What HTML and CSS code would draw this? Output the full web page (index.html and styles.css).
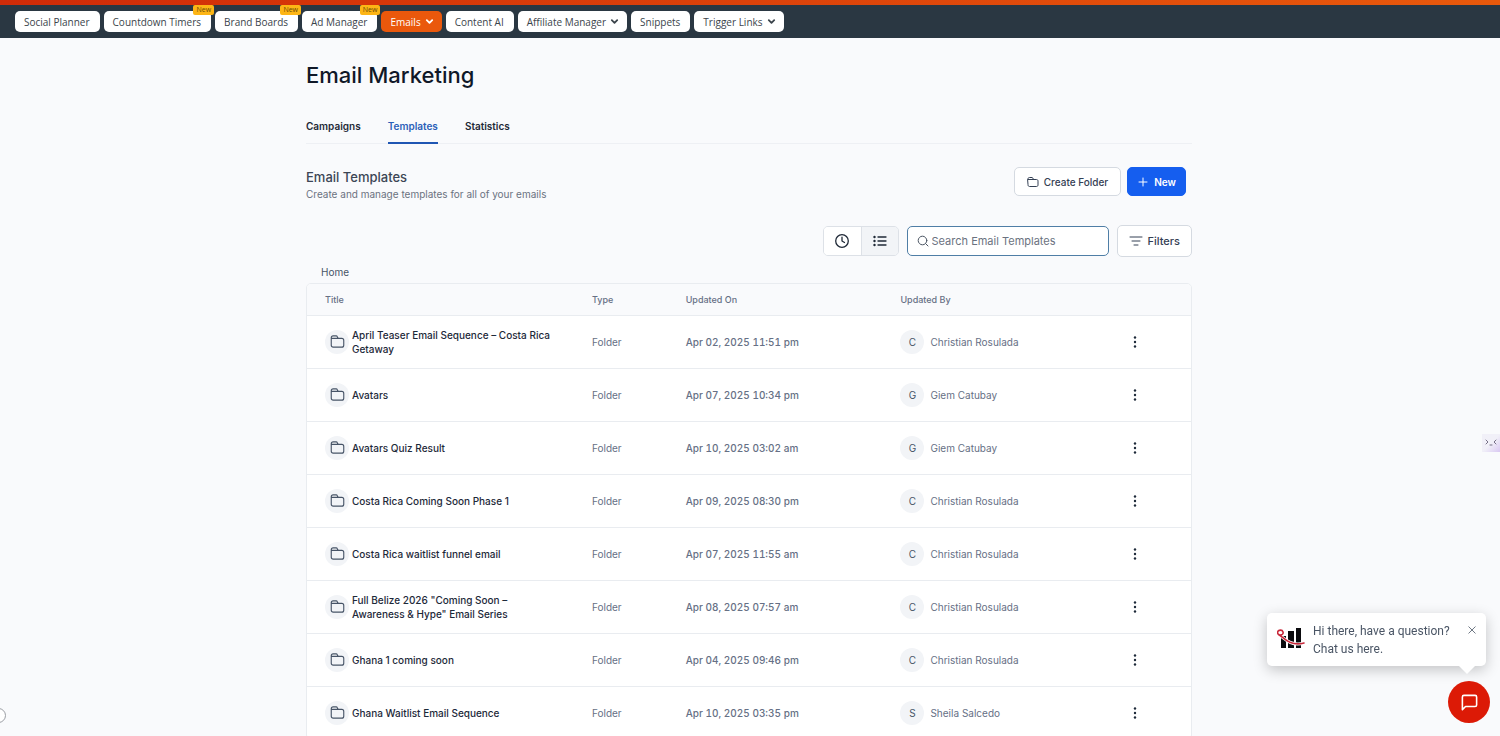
FILE: index.html
```html
<!DOCTYPE html>
<html lang="en">
<head>
    <meta charset="UTF-8">
    <meta name="viewport" content="width=device-width, initial-scale=1.0">
    <title>Email Marketing</title>
    <link rel="stylesheet" href="styles.css">
</head>
<body>
    <svg class="sprite" aria-hidden="true">
        <symbol id="icon-folder" viewBox="0 0 24 24">
            <path d="M13 7l-1.500-3C11.200 3.300 10.700 3 10 3H5C3 3 2 4 2 6v1m0 0h16.800C20.900 7 22 8.100 22 10.200v7.600c0 2.100-1.100 3.200-3.200 3.200H5.200C3.100 21 2 19.900 2 17.800z"/>
        </symbol>
        <symbol id="icon-chevron" viewBox="0 0 10 10">
            <path d="M2 3.500l3 3 3-3"/>
        </symbol>
        <symbol id="icon-dots" viewBox="0 0 18 18">
            <circle cx="9" cy="4.500" r="1.200"/>
            <circle cx="9" cy="9" r="1.200"/>
            <circle cx="9" cy="13.500" r="1.200"/>
        </symbol>
    </svg>

    <header class="topbar">
        <nav class="menu">
            <a href="#">Social Planner</a>
            <a href="#">Countdown Timers<span class="badge">New</span></a>
            <a href="#">Brand Boards<span class="badge">New</span></a>
            <a href="#">Ad Manager<span class="badge">New</span></a>
            <a href="#" class="active">Emails<svg class="chevron"><use href="#icon-chevron"/></svg></a>
            <a href="#">Content AI</a>
            <a href="#">Affiliate Manager<svg class="chevron"><use href="#icon-chevron"/></svg></a>
            <a href="#">Snippets</a>
            <a href="#">Trigger Links<svg class="chevron"><use href="#icon-chevron"/></svg></a>
        </nav>
    </header>

    <main class="container">
        <h1>Email Marketing</h1>

        <nav class="tabs">
            <a href="#">Campaigns</a>
            <a href="#" class="active">Templates</a>
            <a href="#">Statistics</a>
        </nav>

        <div class="section-head">
            <div>
                <h2>Email Templates</h2>
                <p>Create and manage templates for all of your emails</p>
            </div>
            <div class="actions">
                <button class="btn" type="button"><svg class="btn-icon"><use href="#icon-folder"/></svg>Create Folder</button>
                <button class="btn btn-primary" type="button"><svg class="btn-icon" viewBox="0 0 12 12"><path d="M6 2v8M2 6h8"/></svg>New</button>
            </div>
        </div>

        <div class="toolbar">
            <div class="view-toggle">
                <button type="button" aria-label="Recent">
                    <svg viewBox="0 0 16 16"><circle cx="8" cy="8" r="6.300"/><path d="M8 4.200V8l2.500 1.500"/></svg>
                </button>
                <button type="button" class="active" aria-label="List view">
                    <svg viewBox="0 0 16 16"><path d="M6 4h8M6 8h8M6 12h8"/><path class="bullets" d="M2.500 4h.01M2.500 8h.01M2.500 12h.01"/></svg>
                </button>
            </div>
            <label class="search">
                <svg viewBox="0 0 12 12"><circle cx="5.500" cy="5.500" r="4.300"/><path d="M8.700 8.700L11 11"/></svg>
                <input type="text" placeholder="Search Email Templates" aria-label="Search Email Templates">
            </label>
            <button class="btn btn-filters" type="button"><svg class="btn-icon" viewBox="0 0 14 12"><path d="M1 2h12M3 6h8M5 10h4"/></svg>Filters</button>
        </div>

        <a class="breadcrumb" href="#">Home</a>

        <div class="table-wrap">
            <table>
                <thead>
                    <tr>
                        <th class="col-title">Title</th>
                        <th class="col-type">Type</th>
                        <th class="col-date">Updated On</th>
                        <th class="col-user">Updated By</th>
                        <th class="col-menu"></th>
                    </tr>
                </thead>
                <tbody>
                    <tr>
                        <td><div class="title"><span class="circle"><svg><use href="#icon-folder"/></svg></span>April Teaser Email Sequence – Costa Rica Getaway</div></td>
                        <td>Folder</td>
                        <td class="date">Apr 02, 2025 11:51 pm</td>
                        <td><div class="user"><span class="circle">C</span>Christian Rosulada</div></td>
                        <td><button class="more" type="button" aria-label="More"><svg><use href="#icon-dots"/></svg></button></td>
                    </tr>
                    <tr>
                        <td><div class="title"><span class="circle"><svg><use href="#icon-folder"/></svg></span>Avatars</div></td>
                        <td>Folder</td>
                        <td class="date">Apr 07, 2025 10:34 pm</td>
                        <td><div class="user"><span class="circle">G</span>Giem Catubay</div></td>
                        <td><button class="more" type="button" aria-label="More"><svg><use href="#icon-dots"/></svg></button></td>
                    </tr>
                    <tr>
                        <td><div class="title"><span class="circle"><svg><use href="#icon-folder"/></svg></span>Avatars Quiz Result</div></td>
                        <td>Folder</td>
                        <td class="date">Apr 10, 2025 03:02 am</td>
                        <td><div class="user"><span class="circle">G</span>Giem Catubay</div></td>
                        <td><button class="more" type="button" aria-label="More"><svg><use href="#icon-dots"/></svg></button></td>
                    </tr>
                    <tr>
                        <td><div class="title"><span class="circle"><svg><use href="#icon-folder"/></svg></span>Costa Rica Coming Soon Phase 1</div></td>
                        <td>Folder</td>
                        <td class="date">Apr 09, 2025 08:30 pm</td>
                        <td><div class="user"><span class="circle">C</span>Christian Rosulada</div></td>
                        <td><button class="more" type="button" aria-label="More"><svg><use href="#icon-dots"/></svg></button></td>
                    </tr>
                    <tr>
                        <td><div class="title"><span class="circle"><svg><use href="#icon-folder"/></svg></span>Costa Rica waitlist funnel email</div></td>
                        <td>Folder</td>
                        <td class="date">Apr 07, 2025 11:55 am</td>
                        <td><div class="user"><span class="circle">C</span>Christian Rosulada</div></td>
                        <td><button class="more" type="button" aria-label="More"><svg><use href="#icon-dots"/></svg></button></td>
                    </tr>
                    <tr>
                        <td><div class="title"><span class="circle"><svg><use href="#icon-folder"/></svg></span>Full Belize 2026 "Coming Soon – Awareness &amp; Hype" Email Series</div></td>
                        <td>Folder</td>
                        <td class="date">Apr 08, 2025 07:57 am</td>
                        <td><div class="user"><span class="circle">C</span>Christian Rosulada</div></td>
                        <td><button class="more" type="button" aria-label="More"><svg><use href="#icon-dots"/></svg></button></td>
                    </tr>
                    <tr>
                        <td><div class="title"><span class="circle"><svg><use href="#icon-folder"/></svg></span>Ghana 1 coming soon</div></td>
                        <td>Folder</td>
                        <td class="date">Apr 04, 2025 09:46 pm</td>
                        <td><div class="user"><span class="circle">C</span>Christian Rosulada</div></td>
                        <td><button class="more" type="button" aria-label="More"><svg><use href="#icon-dots"/></svg></button></td>
                    </tr>
                    <tr>
                        <td><div class="title"><span class="circle"><svg><use href="#icon-folder"/></svg></span>Ghana Waitlist Email Sequence</div></td>
                        <td>Folder</td>
                        <td class="date">Apr 10, 2025 03:35 pm</td>
                        <td><div class="user"><span class="circle">S</span>Sheila Salcedo</div></td>
                        <td><button class="more" type="button" aria-label="More"><svg><use href="#icon-dots"/></svg></button></td>
                    </tr>
                </tbody>
            </table>
        </div>
    </main>

    <!-- widgets floating over the page -->
    <button class="side-tab" type="button" aria-label="Assistant">
        <svg viewBox="0 0 18 18"><path d="M4 6l2 2-2 2M8 11h2M14 6l-2 2 2 2"/></svg>
    </button>
    <button class="edge-handle" type="button" aria-label="Expand"></button>

    <div class="chat-prompt">
        <svg class="chat-logo" viewBox="0 0 28 24">
            <path class="bars" d="M4 10h5v12H4zM11 5h6v17h-6zM19 2h5v20h-5z"/>
            <path class="ribbon-edge" d="M1 8C-1 4 5 3 6 6c1 3-4 4-5 2 5 3 12 13 26 9"/>
            <path class="ribbon" d="M1 8C-1 4 5 3 6 6c1 3-4 4-5 2 5 3 12 13 26 9"/>
        </svg>
        <p>Hi there, have a question?<br>Chat us here.</p>
        <button class="chat-close" type="button" aria-label="Close"><svg viewBox="0 0 10 10"><path d="M1 1l8 8M9 1L1 9"/></svg></button>
    </div>
    <button class="chat-button" type="button" aria-label="Open chat">
        <svg viewBox="0 0 24 24"><path d="M21 15a2 2 0 0 1-2 2H7l-4 4V5a2 2 0 0 1 2-2h14a2 2 0 0 1 2 2z"/></svg>
    </button>
</body>
</html>
```
FILE: styles.css
```css
* {
    box-sizing: border-box;
}

html {
    scrollbar-width: none;
}

body {
    margin: 0;
    font-family: Inter, "Liberation Sans", sans-serif;
    font-size: 10px;
    color: #1f2937;
    background-color: #f9fafc;
}

a {
    color: inherit;
    text-decoration: none;
}

button {
    font: inherit;
    color: inherit;
    cursor: pointer;
}

svg {
    display: block;
    flex: none;
    fill: none;
    stroke: currentColor;
    stroke-linecap: round;
    stroke-linejoin: round;
}

.sprite {
    position: absolute;
    width: 0;
    height: 0;
}

/* top bar */
.topbar {
    padding: 5px 15px 6px;
    background: linear-gradient(to right, #d02b08, #e8590c) top / 100% 5px no-repeat #2a3742;
}

.menu {
    display: flex;
    gap: 4px;
    padding-top: 6px;
    font-family: "Open Sans", sans-serif;
    color: #3b444b;
}

.menu a {
    position: relative;
    display: flex;
    align-items: center;
    height: 21px;
    padding: 0 10px 0 9px;
    border-radius: 5px;
    background-color: #fff;
    white-space: nowrap;
}

.menu a.active {
    background-color: #ea580c;
    color: #fff;
}

.chevron {
    width: 9px;
    height: 9px;
    margin-left: 4px;
    margin-right: -2px;
    stroke-width: 2;
}

.badge {
    position: absolute;
    top: -6px;
    right: -3px;
    padding: 0 3px;
    border-radius: 2px;
    background-color: #fdb515;
    color: #6b4a05;
    font-size: 7px;
    line-height: 10px;
}

.container {
    max-width: 888px;
    margin: 0 auto;
    padding: 22px 2px 0 0;
}

h1 {
    margin: 0;
    font-size: 22px;
    font-weight: 500;
    line-height: 30px;
    color: #101828;
}

/* tabs */
.tabs {
    display: flex;
    gap: 27px;
    margin-top: 22px;
    border-bottom: 1px solid #eef0f4;
    font-weight: 600;
    line-height: 16px;
}

.tabs a {
    padding: 6px 0 8px;
    margin-bottom: -1px;
    border-bottom: 2px solid transparent;
}

.tabs a.active {
    color: #2b5fb8;
    border-color: #1f56b3;
}

.section-head {
    display: flex;
    justify-content: space-between;
    align-items: flex-start;
    padding: 23px 6px 0 0;
}

h2 {
    margin: 0;
    font-size: 13px;
    font-weight: 500;
    line-height: 20px;
    color: #3c4655;
}

.section-head p {
    margin: 0;
    line-height: 14px;
    color: #6b7280;
}

.actions {
    display: flex;
    gap: 6px;
}

.btn {
    display: flex;
    align-items: center;
    gap: 5px;
    height: 29px;
    padding: 0 12px;
    border: 1px solid #d5dae1;
    border-radius: 5px;
    background-color: #fff;
    font-weight: 500;
    color: #344054;
}

.btn-icon {
    width: 12px;
    height: 12px;
    stroke-width: 1;
}

.btn .btn-icon:has(use) {
    stroke-width: 2;
}

.btn-primary {
    padding: 0 9px;
    border-color: #155eef;
    background-color: #155eef;
    color: #fff;
    font-weight: 600;
}

/* view toggle, search and filters */
.toolbar {
    display: flex;
    justify-content: flex-end;
    align-items: center;
    gap: 8px;
    margin-top: 24px;
}

.view-toggle {
    display: flex;
    border: 1px solid #dde1e7;
    border-radius: 5px;
    overflow: hidden;
}

.view-toggle button {
    width: 37px;
    height: 28px;
    padding: 0 10px;
    border: 0;
    background-color: #fff;
}

.view-toggle button.active {
    border-left: 1px solid #dde1e7;
    background-color: #f2f4f7;
}

.view-toggle svg {
    width: 16px;
    height: 16px;
    stroke-width: 1.3;
}

.view-toggle .bullets {
    stroke-width: 2.4;
}

.search {
    display: flex;
    align-items: center;
    gap: 3px;
    width: 202px;
    height: 30px;
    padding: 0 9px;
    border: 1px solid #4f7ea6;
    border-radius: 5px;
    background-color: #fff;
    font-size: 11px;
    color: #4b5563;
}

.search svg {
    width: 12px;
    height: 12px;
}

.search input {
    flex: 1;
    min-width: 0;
    padding: 0;
    border: 0;
    outline: 0;
    background: none;
    font: inherit;
}

.search input::placeholder {
    color: #6b7280;
}

.btn-filters {
    height: 32px;
    padding: 0 11px;
    font-size: 11px;
}

.btn-filters .btn-icon {
    width: 14px;
}

.breadcrumb {
    display: block;
    width: fit-content;
    padding: 8px 15px 3px;
    line-height: 15px;
    color: #475467;
}

/* templates table */
.table-wrap {
    border: 1px solid #e9ecf0;
    border-radius: 5px;
    background-color: #fff;
    overflow: hidden;
}

table {
    width: 100%;
    border-collapse: collapse;
    table-layout: fixed;
}

th,
td {
    padding: 0 16px 0 18px;
    text-align: left;
    vertical-align: middle;
    font-weight: 400;
    color: #667085;
}

th {
    height: 31px;
    background-color: #f9fafc;
    font-size: 9px;
    font-weight: 500;
}

td {
    height: 53px;
    border-top: 1px solid #e9ecf0;
}

.col-title {
    width: 30.2%;
}

.col-type {
    width: 10.6%;
}

.col-date {
    width: 24.3%;
}

.col-user {
    width: 25.5%;
}

.title,
.user {
    display: flex;
    align-items: center;
}

.title {
    gap: 3px;
    font-weight: 500;
    line-height: 14px;
    color: #1d2939;
}

.date {
    font-weight: 500;
    font-variant-numeric: tabular-nums;
}

.user {
    gap: 6px;
}

.circle {
    display: flex;
    flex: none;
    align-items: center;
    justify-content: center;
    width: 24px;
    height: 24px;
    border-radius: 50%;
    background-color: #f2f4f7;
    color: #475467;
}

.circle svg {
    width: 15px;
    height: 15px;
    stroke-width: 1.8;
}

.more {
    display: block;
    padding: 0;
    border: 0;
    background: none;
}

.more svg {
    width: 18px;
    height: 18px;
    fill: #1d2939;
    stroke: none;
}

/* floating widgets */
.side-tab {
    position: fixed;
    top: 434px;
    right: 0;
    padding: 0;
    border: 0;
    background: linear-gradient(135deg, #f1f0f8 50%, #d9c8f2);
    color: #777187;
}

.side-tab svg {
    width: 18px;
    height: 18px;
}

.edge-handle {
    position: fixed;
    bottom: 13px;
    left: -9px;
    width: 15px;
    height: 15px;
    padding: 0;
    border: 1px solid #9a9da3;
    border-radius: 50%;
    background-color: #fff;
}

.chat-prompt {
    position: fixed;
    right: 14px;
    bottom: 70px;
    display: flex;
    align-items: flex-start;
    width: 219px;
    padding: 9px 10px 8px;
    border-radius: 5px;
    background-color: #fff;
    box-shadow: 0 4px 14px rgba(0, 0, 0, 0.22);
    font-family: Roboto, sans-serif;
    font-size: 12px;
    line-height: 18px;
    color: #4a5565;
}

.chat-prompt::after {
    content: "";
    position: absolute;
    right: 11px;
    bottom: -8px;
    border: 8px solid transparent;
    border-top-color: #fff;
    border-bottom: 0;
}

.chat-prompt p {
    flex: 1;
    margin: 0 0 0 8px;
    white-space: nowrap;
}

.chat-logo {
    width: 28px;
    height: 24px;
    margin-top: 4px;
}

.chat-logo .bars {
    fill: #0b0b0e;
    stroke: none;
}

.chat-logo .ribbon-edge {
    stroke: #fff;
    stroke-width: 3;
}

.chat-logo .ribbon {
    stroke: #c8283a;
    stroke-width: 1.6;
}

.chat-close {
    padding: 4px 0;
    border: 0;
    background: none;
}

.chat-close svg {
    width: 8px;
    height: 8px;
}

.chat-button {
    position: fixed;
    right: 10px;
    bottom: 13px;
    display: flex;
    align-items: center;
    justify-content: center;
    width: 42px;
    height: 42px;
    padding: 0;
    border: 0;
    border-radius: 50%;
    background-color: #dc1a06;
    color: #fff;
}

.chat-button svg {
    width: 19px;
    height: 19px;
    stroke-width: 2;
}
```
